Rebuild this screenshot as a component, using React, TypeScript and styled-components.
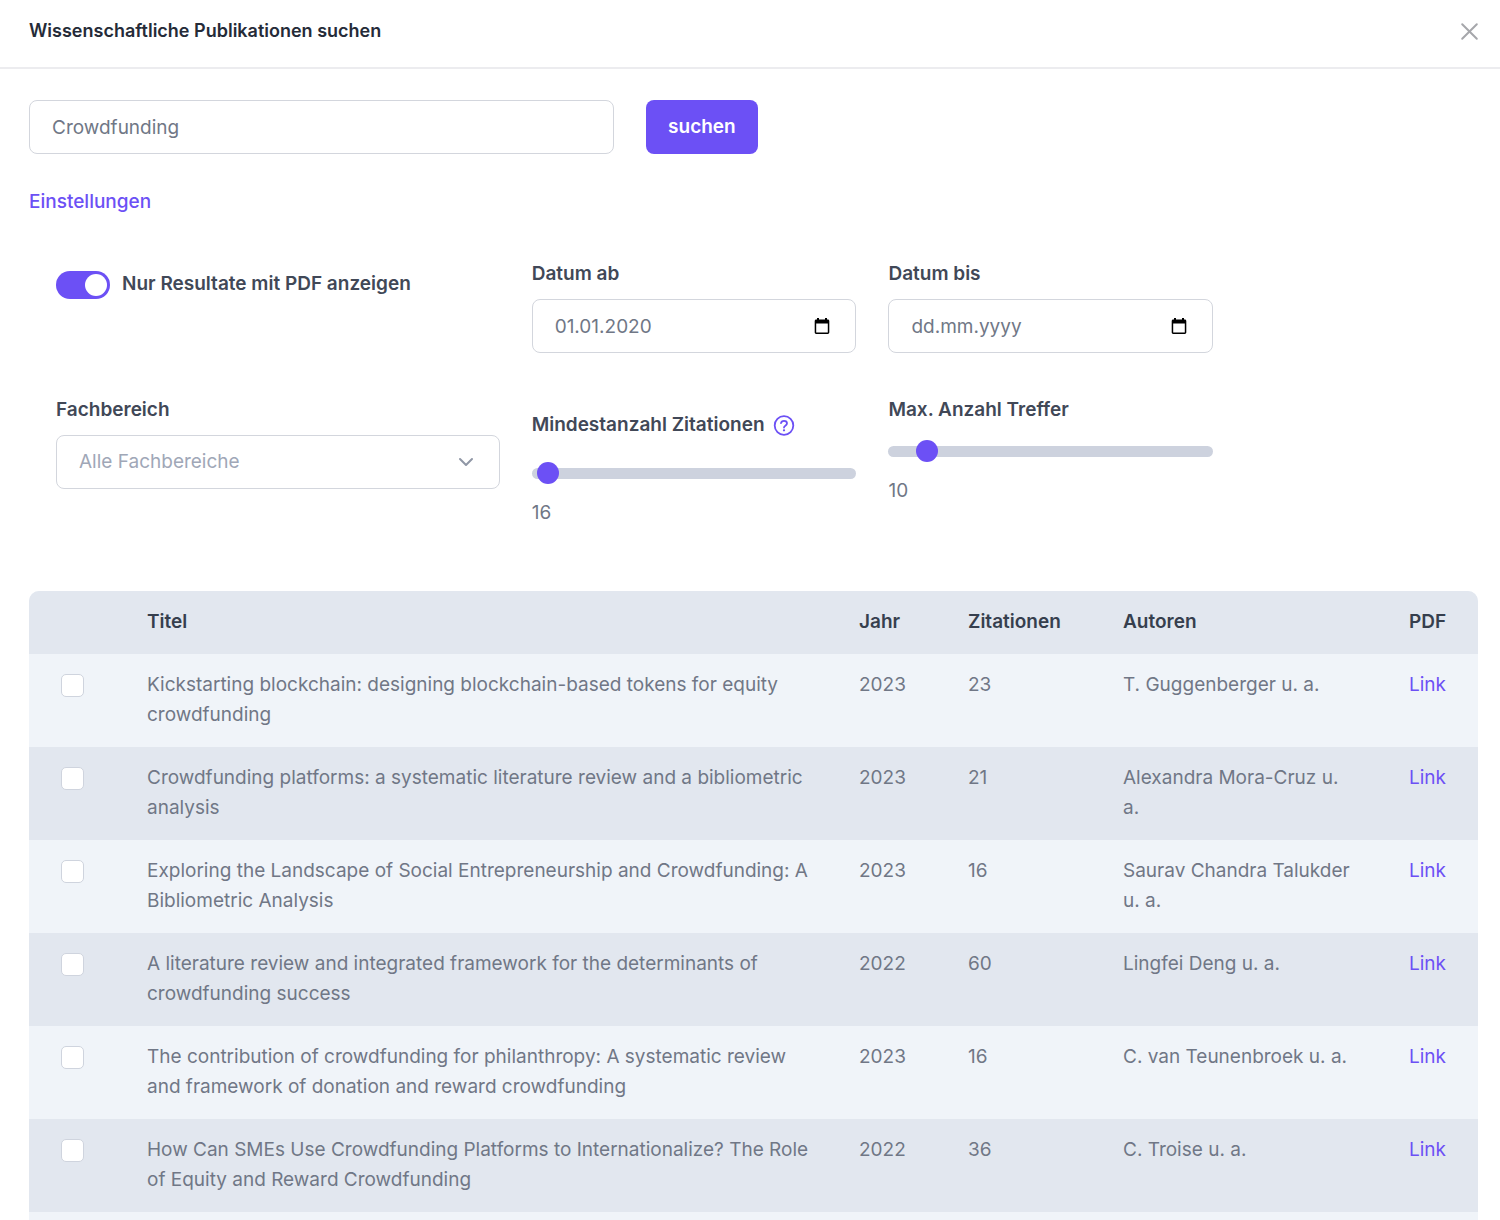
import React, { useState } from "react";
import styled, { createGlobalStyle } from "styled-components";

const color = {
  primary: "#6c50f5",
  heading: "#252b38",
  label: "#414857",
  tableHead: "#363f4e",
  text: "#707786",
  muted: "#a0a7b7",
  border: "#d3d6dd",
  track: "#cdd2de",
  rowLight: "#f0f4f9",
  rowDark: "#e2e7ef",
};

const GlobalStyle = createGlobalStyle`
  *, *::before, *::after { box-sizing: border-box; }
  body {
    margin: 0;
    background: #ffffff;
    color: ${color.text};
    font-family: Inter, "Liberation Sans", sans-serif;
    font-size: 19px;
    line-height: 30px;
  }
  button, input, select { font: inherit; color: inherit; }
`;

const Dialog = styled.main`
  display: flex;
  flex-direction: column;
  height: 100vh;
  overflow: hidden;
`;

const Header = styled.header`
  display: flex;
  flex: none;
  align-items: center;
  justify-content: space-between;
  padding: 16px 20px 21px 29px;
  border-bottom: 2px solid #ececef;
`;

const Title = styled.h1`
  margin: 0;
  color: ${color.heading};
  font-size: 18px;
  line-height: 30px;
  font-weight: 600;
`;

const CloseButton = styled.button`
  display: flex;
  padding: 0;
  border: 0;
  background: none;
  color: #a6a7ab;
  cursor: pointer;
`;

const Body = styled.div`
  display: flex;
  flex: 1;
  flex-direction: column;
  min-height: 0;
  padding: 31px 22px 0 29px;
`;

const Grid = styled.div`
  display: grid;
  grid-template-columns: repeat(12, minmax(0, 1fr));
  column-gap: 32px;
`;

const SearchForm = styled(Grid).attrs({ as: "form" })`
  flex: none;
`;

const SettingsGrid = styled(Grid)`
  flex: none;
  row-gap: 42px;
  padding: 0 27px;
  margin: 42px 0 63px;
`;

const Cell = styled.div<{ $span: number }>`
  grid-column: span ${(p) => p.$span};
`;

const TextField = styled.input`
  display: block;
  width: 100%;
  height: 54px;
  padding: 0 22px;
  border: 1px solid ${color.border};
  border-radius: 8px;
  background: #ffffff;
  outline: none;
  &::placeholder {
    color: ${color.text};
    opacity: 1;
  }
`;

const SubmitButton = styled.button`
  height: 54px;
  padding: 0 22px;
  border: 0;
  border-radius: 8px;
  background: ${color.primary};
  color: #ffffff;
  font-weight: 600;
  cursor: pointer;
`;

const SettingsToggle = styled.button`
  flex: none;
  align-self: flex-start;
  margin-top: 33px;
  padding: 0;
  border: 0;
  background: none;
  color: ${color.primary};
  font-weight: 500;
  cursor: pointer;
`;

const Label = styled.label`
  display: block;
  color: ${color.label};
  font-weight: 600;
`;

const FieldLabel = styled(Label)`
  margin-bottom: 10px;
`;

const LabelRow = styled.div`
  display: flex;
  align-items: center;
  gap: 8px;
  margin: 15px 0 22px;
`;

const HelpButton = styled.button`
  display: flex;
  padding: 0;
  border: 0;
  background: none;
  color: ${color.primary};
  cursor: pointer;
`;

const SwitchRow = styled.div`
  display: flex;
  align-items: center;
  gap: 12px;
  padding-top: 10px;
`;

const Switch = styled.input`
  appearance: none;
  display: flex;
  align-items: center;
  width: 54px;
  height: 28px;
  margin: 2px 0 0;
  padding: 3px;
  border-radius: 14px;
  background: ${color.track};
  cursor: pointer;
  &::before {
    content: "";
    width: 22px;
    height: 22px;
    border-radius: 50%;
    background: #ffffff;
  }
  &:checked {
    justify-content: flex-end;
    background: ${color.primary};
  }
`;

const Control = styled.div`
  display: grid;
  grid-template-columns: minmax(0, 1fr) auto;
  align-items: center;
  > :first-child {
    grid-area: 1 / 1 / 2 / 3;
  }
  > :last-child {
    grid-area: 1 / 2 / 2 / 3;
  }
`;

const CalendarButton = styled.button`
  display: flex;
  margin-right: 24px;
  padding: 0;
  border: 0;
  background: none;
  color: #000000;
  cursor: pointer;
`;

const Select = styled(TextField).attrs({ as: "select" })`
  appearance: none;
  color: ${color.muted};
`;

const Chevron = styled.svg`
  margin-right: 24px;
  color: #9097a6;
  pointer-events: none;
`;

const Slider = styled.input`
  appearance: none;
  display: block;
  width: 100%;
  height: 22px;
  margin: 0;
  background: none;
  cursor: pointer;
  &::-webkit-slider-runnable-track {
    height: 11px;
    border-radius: 6px;
    background: ${color.track};
  }
  &::-webkit-slider-thumb {
    appearance: none;
    width: 22px;
    height: 22px;
    margin-top: -6px;
    border-radius: 50%;
    background: ${color.primary};
  }
`;

const SliderLabel = styled(Label)`
  margin-bottom: 15px;
`;

const SliderValue = styled.output`
  display: block;
  margin-top: 14px;
`;

const TableArea = styled.div`
  flex: 1;
  min-height: 0;
  overflow: hidden;
  border-radius: 10px 10px 0 0;
  background: ${color.rowLight};
`;

const Table = styled.table`
  width: 100%;
  border-collapse: collapse;
  table-layout: fixed;
  text-align: left;
`;

const HeadCell = styled.th<{ $width?: number }>`
  width: ${(p) => (p.$width ? `${p.$width}px` : "auto")};
  padding: 16px 0 17px 32px;
  color: ${color.tableHead};
  font-weight: 600;
`;

const Row = styled.tr`
  background: ${color.rowLight};
  &:nth-child(even) {
    background: ${color.rowDark};
  }
`;

const HeadRow = styled.tr`
  background: ${color.rowDark};
`;

const DataCell = styled.td`
  padding: 16px 0 17px 32px;
  vertical-align: top;
`;

const TitleCell = styled(DataCell)`
  padding-right: 12px;
`;

const AuthorsCell = styled(DataCell)`
  padding-right: 24px;
`;

const RowCheckbox = styled.input`
  appearance: none;
  display: block;
  width: 23px;
  height: 23px;
  margin: 4px 0 0;
  border: 1px solid #cfd4de;
  border-radius: 5px;
  background: #ffffff;
  cursor: pointer;
  &:checked {
    background: ${color.primary};
  }
`;

const PdfLink = styled.a`
  color: ${color.primary};
  text-decoration: none;
`;

const CloseIcon = () => (
  <svg width="21" height="21" viewBox="0 0 21 21" fill="none" stroke="currentColor" strokeWidth="2" strokeLinecap="round" aria-hidden="true">
    <path d="M3.2 3.2l14.6 14.6M17.8 3.2L3.2 17.8" />
  </svg>
);

const HelpIcon = () => (
  <svg width="22" height="22" viewBox="0 0 22 22" fill="none" stroke="currentColor" strokeWidth="1.8" strokeLinecap="round" strokeLinejoin="round" aria-hidden="true">
    <circle cx="11" cy="11.5" r="9.3" />
    <path d="M8 9.200c.3-1.600 1.500-2.400 3-2.400 1.700 0 3 1 3 2.500 0 1.200-.7 1.800-1.600 2.400-.9.600-1.400 1-1.400 1.900" />
    <circle cx="11" cy="16.300" r=".6" fill="currentColor" strokeWidth="1.100" />
  </svg>
);

const CalendarIcon = () => (
  <svg width="20" height="20" viewBox="0 0 20 20" aria-hidden="true">
    <path
      fill="currentColor"
      fillRule="evenodd"
      d="M5 2h2v1.500h6V2h2v1.500h.8c.9 0 1.500.7 1.500 1.500v11.300c0 .9-.7 1.600-1.500 1.600H4.200c-.9 0-1.500-.7-1.500-1.600V5c0-.8.600-1.500 1.500-1.500H5zM4.200 7.500v8.900h11.600V7.500z"
    />
  </svg>
);

const publications = [
  { title: "Kickstarting blockchain: designing blockchain-based tokens for equity crowdfunding", year: 2023, citations: 23, authors: "T. Guggenberger u. a." },
  { title: "Crowdfunding platforms: a systematic literature review and a bibliometric analysis", year: 2023, citations: 21, authors: "Alexandra Mora-Cruz u. a." },
  { title: "Exploring the Landscape of Social Entrepreneurship and Crowdfunding: A Bibliometric Analysis", year: 2023, citations: 16, authors: "Saurav Chandra Talukder u. a." },
  { title: "A literature review and integrated framework for the determinants of crowdfunding success", year: 2022, citations: 60, authors: "Lingfei Deng u. a." },
  { title: "The contribution of crowdfunding for philanthropy: A systematic review and framework of donation and reward crowdfunding", year: 2023, citations: 16, authors: "C. van Teunenbroek u. a." },
  { title: "How Can SMEs Use Crowdfunding Platforms to Internationalize? The Role of Equity and Reward Crowdfunding", year: 2022, citations: 36, authors: "C. Troise u. a." },
];

export default function App() {
  const [minCitations, setMinCitations] = useState(16);
  const [maxHits, setMaxHits] = useState(10);

  return (
    <>
      <GlobalStyle />
      <Dialog>
        <Header>
          <Title>Wissenschaftliche Publikationen suchen</Title>
          <CloseButton type="button" aria-label="Schließen">
            <CloseIcon />
          </CloseButton>
        </Header>

        <Body>
          <SearchForm onSubmit={(e: React.FormEvent) => e.preventDefault()}>
            <Cell $span={5}>
              <TextField type="text" aria-label="Suchbegriff" defaultValue="Crowdfunding" />
            </Cell>
            <Cell $span={3}>
              <SubmitButton type="submit">suchen</SubmitButton>
            </Cell>
          </SearchForm>

          <SettingsToggle type="button">Einstellungen</SettingsToggle>

          <SettingsGrid>
            <Cell $span={4}>
              <SwitchRow>
                <Switch type="checkbox" role="switch" id="pdf-only" defaultChecked />
                <Label htmlFor="pdf-only">Nur Resultate mit PDF anzeigen</Label>
              </SwitchRow>
            </Cell>
            <Cell $span={3}>
              <FieldLabel htmlFor="date-from">Datum ab</FieldLabel>
              <Control>
                <TextField type="text" id="date-from" placeholder="dd.mm.yyyy" defaultValue="01.01.2020" />
                <CalendarButton type="button" aria-label="Datum ab wählen">
                  <CalendarIcon />
                </CalendarButton>
              </Control>
            </Cell>
            <Cell $span={3}>
              <FieldLabel htmlFor="date-to">Datum bis</FieldLabel>
              <Control>
                <TextField type="text" id="date-to" placeholder="dd.mm.yyyy" />
                <CalendarButton type="button" aria-label="Datum bis wählen">
                  <CalendarIcon />
                </CalendarButton>
              </Control>
            </Cell>
            <Cell $span={2} />

            <Cell $span={4}>
              <FieldLabel htmlFor="field">Fachbereich</FieldLabel>
              <Control>
                <Select id="field">
                  <option>Alle Fachbereiche</option>
                </Select>
                <Chevron width="20" height="20" viewBox="0 0 20 20" fill="none" stroke="currentColor" strokeWidth="2" strokeLinecap="round" strokeLinejoin="round" aria-hidden="true">
                  <path d="M4 7l6 6 6-6" />
                </Chevron>
              </Control>
            </Cell>
            <Cell $span={3}>
              <LabelRow>
                <Label htmlFor="min-citations">Mindestanzahl Zitationen</Label>
                <HelpButton type="button" aria-label="Hilfe">
                  <HelpIcon />
                </HelpButton>
              </LabelRow>
              <Slider
                type="range"
                id="min-citations"
                min={0}
                max={1000}
                value={minCitations}
                onChange={(e: React.ChangeEvent<HTMLInputElement>) => setMinCitations(Number(e.target.value))}
              />
              <SliderValue htmlFor="min-citations">{minCitations}</SliderValue>
            </Cell>
            <Cell $span={3}>
              <SliderLabel htmlFor="max-hits">Max. Anzahl Treffer</SliderLabel>
              <Slider
                type="range"
                id="max-hits"
                min={1}
                max={100}
                value={maxHits}
                onChange={(e: React.ChangeEvent<HTMLInputElement>) => setMaxHits(Number(e.target.value))}
              />
              <SliderValue htmlFor="max-hits">{maxHits}</SliderValue>
            </Cell>
          </SettingsGrid>

          <TableArea>
            <Table>
              <thead>
                <HeadRow>
                  <HeadCell $width={86} aria-label="Auswahl" />
                  <HeadCell>Titel</HeadCell>
                  <HeadCell $width={109}>Jahr</HeadCell>
                  <HeadCell $width={155}>Zitationen</HeadCell>
                  <HeadCell $width={286}>Autoren</HeadCell>
                  <HeadCell $width={101}>PDF</HeadCell>
                </HeadRow>
              </thead>
              <tbody>
                {publications.map((p) => (
                  <Row key={p.title}>
                    <DataCell>
                      <RowCheckbox type="checkbox" aria-label={p.title} />
                    </DataCell>
                    <TitleCell>{p.title}</TitleCell>
                    <DataCell>{p.year}</DataCell>
                    <DataCell>{p.citations}</DataCell>
                    <AuthorsCell>{p.authors}</AuthorsCell>
                    <DataCell>
                      <PdfLink href="#">Link</PdfLink>
                    </DataCell>
                  </Row>
                ))}
              </tbody>
            </Table>
          </TableArea>
        </Body>
      </Dialog>
    </>
  );
}
